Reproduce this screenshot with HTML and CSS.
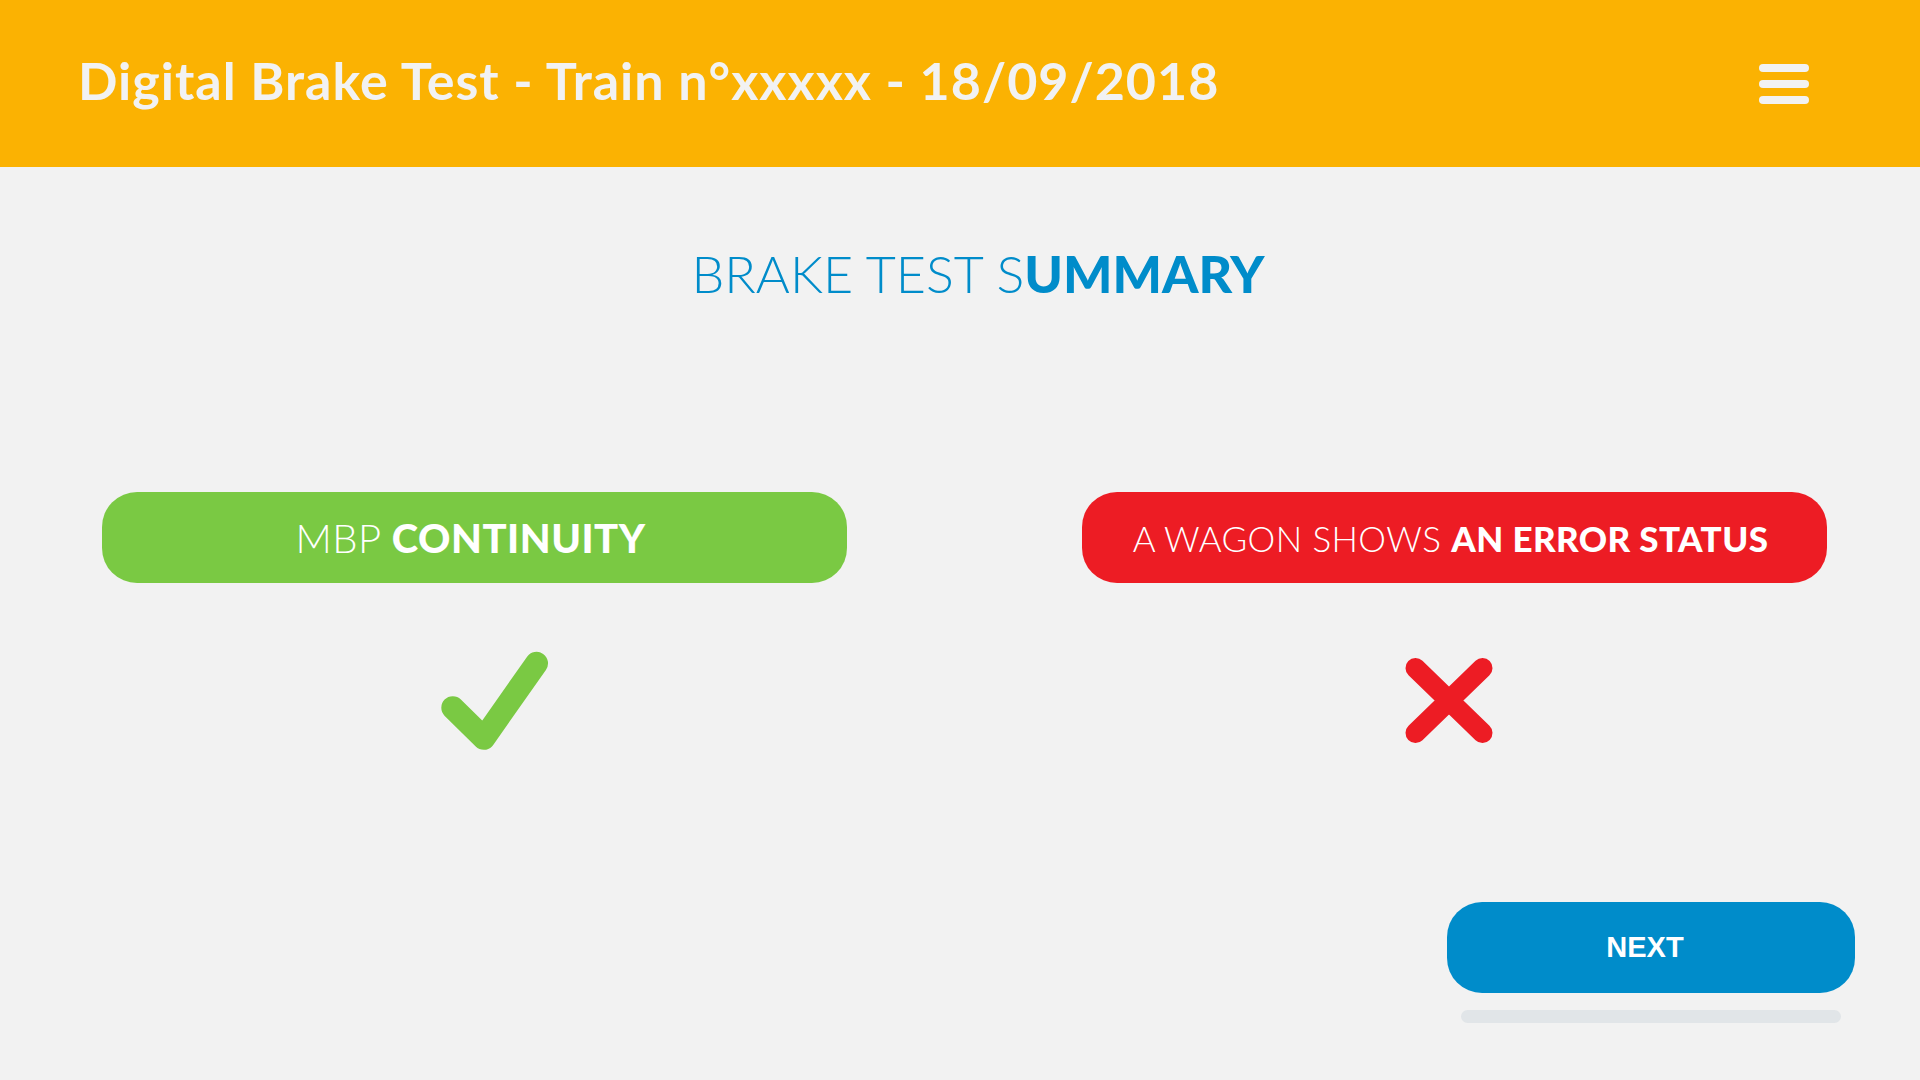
FILE: index.html
```html
<!DOCTYPE html>
<html lang="en">
<head>
<meta charset="utf-8">
<title>Digital Brake Test</title>
<link rel="stylesheet" href="styles.css">
</head>
<body>
<header class="topbar">
  <h1 class="topbar-title">Digital Brake Test - Train n°xxxxx - 18/09/2018</h1>
  <button class="menu" aria-label="Menu">
    <span class="menu-line"></span>
    <span class="menu-line"></span>
    <span class="menu-line"></span>
  </button>
</header>
<main class="content">
  <h2 class="summary-title"><span class="light">BRAKE TEST S</span><span class="bold">UMMARY</span></h2>
  <section class="results">
    <div class="result">
      <div class="pill pill-ok"><span class="light">MBP </span><span class="bold">CONTINUITY</span></div>
      <svg class="status-icon" width="200" height="110" viewBox="0 0 200 110">
        <polyline points="77.8,67.7 108.8,98.3 161.5,23.3" fill="none" stroke="#7ac943" stroke-width="23" stroke-linecap="round" stroke-linejoin="round"/>
      </svg>
    </div>
    <div class="result">
      <div class="pill pill-error pill-small"><span class="light">A WAGON SHOWS </span><span class="bold">AN ERROR STATUS</span></div>
      <svg class="status-icon" width="200" height="110" viewBox="0 0 200 110">
        <path d="M60.5 28 L127.5 93 M127.5 28 L60.5 93" fill="none" stroke="#ed1c24" stroke-width="20" stroke-linecap="round"/>
      </svg>
    </div>
  </section>
  <div class="actions">
    <div class="next-wrap">
      <button class="next">NEXT</button>
      <div class="progress"></div>
    </div>
  </div>
</main>
</body>
</html>
```
FILE: styles.css
```css
html, body {
  margin: 0;
  padding: 0;
}
body {
  background: #f2f2f2;
  font-family: Lato, "Open Sans", sans-serif;
  width: 1920px;
  height: 1080px;
  overflow: hidden;
}
.topbar {
  height: 167px;
  background: #fbb202;
  display: flex;
  align-items: center;
  justify-content: space-between;
  padding: 0 111px 0 78px;
  box-sizing: border-box;
}
.topbar-title {
  margin: 0;
  color: #f2f2f2;
  font-size: 52px;
  font-weight: 700;
  line-height: 1;
  letter-spacing: 1px;
  padding-bottom: 7px;
}
.menu {
  background: none;
  border: 0;
  padding: 0;
  width: 50px;
  display: flex;
  flex-direction: column;
  gap: 8px;
  cursor: pointer;
}
.menu-line {
  display: block;
  height: 8px;
  border-radius: 4px;
  background: #f2f2f2;
}
.content {
  display: flex;
  flex-direction: column;
}
.summary-title {
  margin: 80px 0 0;
  text-align: center;
  font-size: 52px;
  line-height: 52px;
  color: #008cca;
  font-weight: 300;
  padding-left: 36px;
}
.light {
  font-weight: 300;
}
.bold {
  font-weight: 900;
}
.results {
  display: grid;
  grid-template-columns: 745px 745px;
  column-gap: 235px;
  padding: 0 93px 0 102px;
  margin-top: 193px;
}
.result {
  display: flex;
  flex-direction: column;
  align-items: center;
}
.pill {
  width: 100%;
  height: 91px;
  box-sizing: border-box;
  padding-right: 8px;
  border-radius: 35px;
  display: flex;
  align-items: center;
  justify-content: center;
  color: #ffffff;
  font-size: 40px;
  letter-spacing: 0.5px;
  white-space: pre;
}
.pill-small {
  font-size: 35px;
  letter-spacing: 0.4px;
}
.pill-ok {
  background: #7ac943;
}
.pill-error {
  background: #ed1c24;
}
.status-icon {
  display: block;
  margin-top: 57px;
}
.actions {
  display: flex;
  justify-content: flex-end;
  padding-right: 65px;
  margin-top: 152px;
}
.next-wrap {
  width: 408px;
  display: flex;
  flex-direction: column;
}
.next {
  height: 91px;
  border: 0;
  border-radius: 35px;
  background: #008cca;
  color: #ffffff;
  font-family: "Liberation Sans", Arial, sans-serif;
  font-weight: 700;
  font-size: 29px;
  padding: 0 12px 0 0;
}
.progress {
  margin: 17px 14px 0;
  height: 13px;
  border-radius: 7px;
  background: #e1e5e8;
}
```
